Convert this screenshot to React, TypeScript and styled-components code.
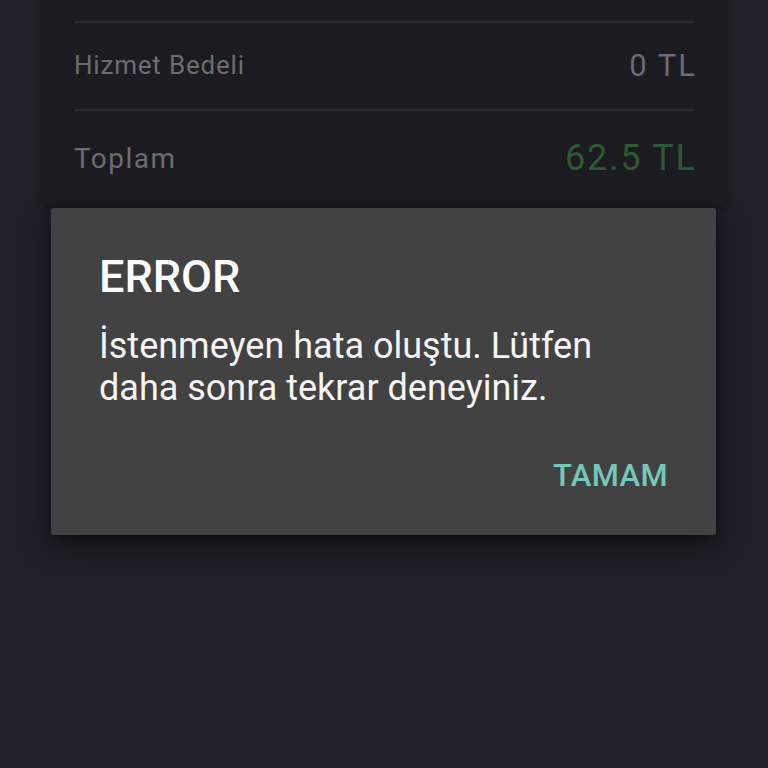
import React from "react";
import styled, { createGlobalStyle } from "styled-components";

const Global = createGlobalStyle`
  html, body { margin: 0; padding: 0; background: #202029; }
  body { font-family: Roboto, "Noto Sans", "Liberation Sans", sans-serif; }
  * { box-sizing: border-box; }
`;

const Page = styled.div`
  position: relative;
  width: 768px;
  height: 768px;
  overflow: hidden;
  background: #202029;
`;

const SummaryCard = styled.div`
  margin: 0 40px;
  padding: 21px 33px 0 34px;
  background: #1b1b21;
  border-radius: 0 0 8px 8px;
  box-shadow: 0 2px 6px rgba(0, 0, 0, 0.25);
`;

const Row = styled.div<{ $h: number }>`
  display: flex;
  align-items: center;
  justify-content: space-between;
  height: ${(p) => p.$h}px;
  border-top: 2px solid #2a2a31;
`;

const Label = styled.span<{ $size: number; $ls: number }>`
  font-size: ${(p) => p.$size}px;
  letter-spacing: ${(p) => p.$ls}px;
  color: #6d6d71;
  line-height: 1.2;
`;

const Value = styled.span<{ $size: number; $ls: number; $color: string }>`
  font-size: ${(p) => p.$size}px;
  letter-spacing: ${(p) => p.$ls}px;
  margin-right: ${(p) => -p.$ls}px;
  color: ${(p) => p.$color};
  line-height: 1.2;
`;

const Dialog = styled.div`
  position: absolute;
  top: 208px;
  left: 51px;
  width: 665px;
  height: 327px;
  background: #424242;
  border-radius: 3px;
  box-shadow: 0 10px 30px rgba(0, 0, 0, 0.45), 0 4px 10px rgba(0, 0, 0, 0.3);
  padding: 43px 48px 41px 48px;
  display: flex;
  flex-direction: column;
`;

const Title = styled.h2`
  margin: 0;
  font-size: 45px;
  line-height: 52px;
  font-weight: 500;
  color: #fafafa;
`;

const Message = styled.p`
  margin: 22px 0 0 0;
  font-size: 36px;
  line-height: 42px;
  font-weight: 400;
  color: #f5f5f5;
`;

const Actions = styled.div`
  margin-top: auto;
  display: flex;
  justify-content: flex-end;
`;

const TextButton = styled.button`
  border: none;
  background: none;
  padding: 0;
  font-family: inherit;
  font-size: 31px;
  line-height: 36px;
  letter-spacing: 0.4px;
  font-weight: 500;
  color: #76c7bb;
  cursor: pointer;
`;

export default function App() {
  return (
    <Page>
      <Global />
      <SummaryCard>
        <Row $h={88}>
          <Label $size={26} $ls={0.8}>Hizmet Bedeli</Label>
          <Value $size={31} $ls={2} $color="#686a77">0 TL</Value>
        </Row>
        <Row $h={98}>
          <Label $size={28} $ls={1.5}>Toplam</Label>
          <Value $size={36} $ls={1.8} $color="#2d5831">62.5 TL</Value>
        </Row>
      </SummaryCard>
      <Dialog role="alertdialog">
        <Title>ERROR</Title>
        <Message>
          İstenmeyen hata oluştu. Lütfen
          <br />
          daha sonra tekrar deneyiniz.
        </Message>
        <Actions>
          <TextButton>TAMAM</TextButton>
        </Actions>
      </Dialog>
    </Page>
  );
}
